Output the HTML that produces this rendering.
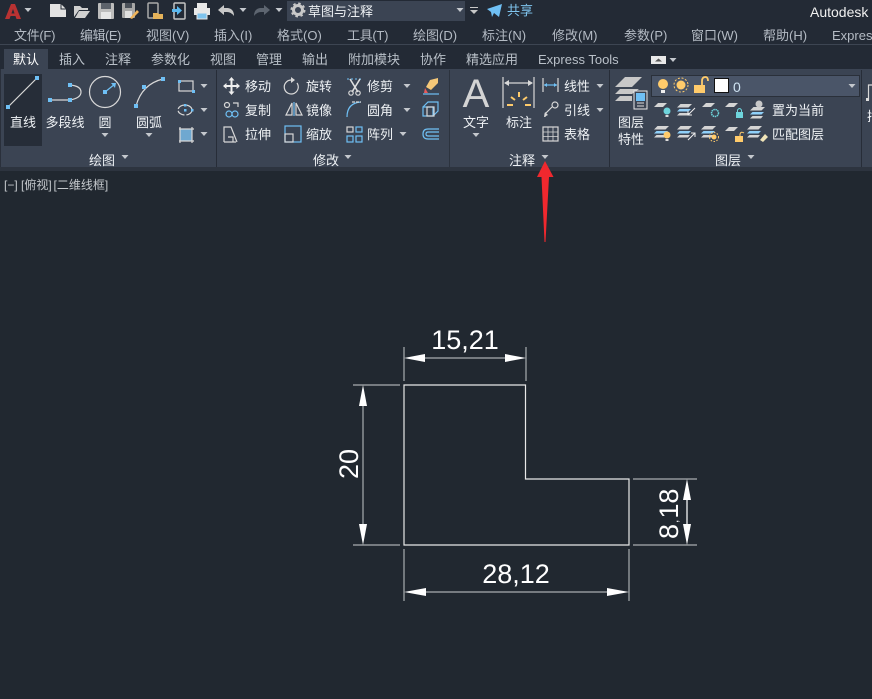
<!DOCTYPE html>
<html><head><meta charset="utf-8"><style>
html,body{margin:0;padding:0;background:#212830;width:872px;height:699px;overflow:hidden}
svg{display:block}
text{font-family:"Liberation Sans","Noto Sans CJK SC",sans-serif}
.m{font-size:13px;fill:#b4bbc4}
.t{font-size:13px;fill:#b9c0c8}
.r{font-size:13px;fill:#eef1f4}
.c{text-anchor:middle}
.s{fill:none;stroke:#d8d8d8;stroke-width:1.2}
.b{fill:none;stroke:#6fc0f5;stroke-width:1.2}
.g{fill:#cfcfcf}
.q{fill:#6fc0f5}
.y{fill:#ffcb6b}
.d{text-anchor:middle;font-size:27px;fill:#fff}
.w{stroke:#e6e6e6;stroke-width:1.2;fill:none}
.v{stroke:#a9adb0;stroke-width:1.2;fill:none}
</style></head><body>
<svg width="872" height="699" viewBox="0 0 872 699" xmlns="http://www.w3.org/2000/svg">
<defs>
<path id="car" d="M-3.5 -2H3.5L0 2Z" fill="#c4c8cd"/>
<g id="lay"><path d="M-6 -1 L-2 -5 H7 L3 -1Z" fill="#d4d4d4"/></g>
<g id="stk"><path d="M-8 6.500 L-5.500 4 H5 L3 6.500Z" fill="#d4d4d4"/><path d="M-8 2.500 L-5.500 0 H6 L3.500 2.500Z" fill="#8fd0fa"/><path d="M-8 -1.500 L-4.500 -5 H7 L3.500 -1.500Z" fill="#d4d4d4"/></g>
</defs>
<rect width="872" height="699" fill="#212830"/>
<rect width="872" height="44" fill="#232a35"/>
<rect y="44" width="872" height="1" fill="#3d4552"/>
<rect y="45" width="872" height="24" fill="#232a35"/>
<rect x="4" y="49" width="44" height="20" fill="#3b4453"/>
<rect y="69" width="872" height="98" fill="#3b4453"/>
<rect y="167" width="872" height="4" fill="#2d343f"/>
<rect x="0" y="69" width="1" height="98" fill="#2a303b"/>
<rect x="216" y="70" width="1" height="97" fill="#272d38"/>
<rect x="449" y="70" width="1" height="97" fill="#2c333e"/>
<rect x="609" y="70" width="1" height="97" fill="#272d38"/>
<rect x="861" y="70" width="1" height="97" fill="#272d38"/>

<!-- quick access -->
<path d="M5 19 L11 4 H15 L21 19 H16.500 L13 9 L9.500 19Z" fill="#b83232"/><path d="M9 13.500H17V16H9Z" fill="#b83232"/>
<use href="#car" x="28" y="10"/>
<path d="M50 4H61L66 9V17H50Z" fill="#e2e2e2"/><path d="M61 4V9H66" fill="none" stroke="#232a35"/>
<path d="M74 17V6H80L82 8H88V10H79L74 17ZM79 11H90L85 18H75Z" fill="#d0d0d0"/>
<rect x="98" y="3" width="16" height="16" rx="1" fill="#bdbdbd"/><rect x="101" y="3" width="10" height="6" fill="#5c626b"/><rect x="101" y="12" width="10" height="7" fill="#e6e6e6"/>
<rect x="122" y="3" width="13" height="15" rx="1" fill="#a8a8a8"/><rect x="125" y="3" width="7" height="5" fill="#4a5059"/><rect x="125" y="11" width="7" height="7" fill="#e0e0e0"/><path d="M130 18 L137 10 L139 12 L132 19Z" fill="#f0b45a"/>
<rect x="148" y="3" width="10" height="15" rx="1" fill="none" stroke="#aaa" stroke-width="1.500"/><path d="M153 13H158L159 14H163V19H153Z" fill="#e4b25a"/>
<rect x="174" y="3" width="11" height="16" rx="1" fill="none" stroke="#c4c4c4" stroke-width="1.500"/><path d="M172 9H177V6L182 10.500L177 15V12H172Z" fill="#5cb8ee"/>
<rect x="197" y="3" width="10" height="5" fill="#e8e8e8"/><rect x="194" y="8" width="16" height="7" fill="#e8e8e8"/><rect x="197" y="13" width="10" height="6" fill="#7fc4ee" stroke="#e8e8e8"/>
<path d="M218 10 L224 5 V8 H228 Q234 9 234 16 Q231 12 227 12 H224 V15Z" fill="#c8c8c8"/>
<use href="#car" x="243" y="10"/>
<path d="M270 10 L264 5 V8 H260 Q254 9 254 16 Q257 12 261 12 H264 V15Z" fill="#5d6570"/>
<use href="#car" x="279" y="10"/>
<rect x="287" y="1" width="178" height="20" fill="#3b4453"/>
<circle cx="298" cy="10" r="4.500" fill="none" stroke="#c8c8c8" stroke-width="3"/><circle cx="298" cy="10" r="6.500" fill="none" stroke="#c8c8c8" stroke-width="2" stroke-dasharray="2.500 2.600"/>
<text x="308" y="16" font-size="13" fill="#eef1f4">草图与注释</text>
<use href="#car" x="460" y="10"/>
<rect x="470" y="7" width="8" height="1" fill="#c8c8c8"/><path d="M470 10H478L474 14Z" fill="#c8c8c8"/>
<path d="M487 9 L502 4 L499 17 L494 13 L492 17 L491 12Z" fill="#6fc0f5"/>
<text x="507" y="15" font-size="13" fill="#7fc4ee">共享</text>
<text x="810" y="17" font-size="14" fill="#f0f0f0">Autodesk</text>

<!-- menu -->
<text class="m" x="14" y="40" style="letter-spacing:-.3px">文件(F)</text><text class="m" x="80" y="40" style="letter-spacing:-.5px">编辑(E)</text><text class="m" x="146" y="40">视图(V)</text><text class="m" x="214" y="40">插入(I)</text><text class="m" x="277" y="40">格式(O)</text><text class="m" x="347" y="40" style="letter-spacing:-.3px">工具(T)</text><text class="m" x="413" y="40">绘图(D)</text><text class="m" x="482" y="40">标注(N)</text><text class="m" x="552" y="40">修改(M)</text><text class="m" x="624" y="40">参数(P)</text><text class="m" x="691" y="40">窗口(W)</text><text class="m" x="763" y="40">帮助(H)</text><text class="m" x="832" y="40">Express</text>
<!-- tabs -->
<text class="t" x="13" y="64" style="fill:#fff">默认</text><text class="t" x="59" y="64">插入</text><text class="t" x="105" y="64">注释</text><text class="t" x="151" y="64">参数化</text><text class="t" x="210" y="64">视图</text><text class="t" x="256" y="64">管理</text><text class="t" x="302" y="64">输出</text><text class="t" x="348" y="64">附加模块</text><text class="t" x="420" y="64">协作</text><text class="t" x="466" y="64">精选应用</text><text class="t" x="538" y="64">Express Tools</text>
<rect x="651" y="56" width="15" height="8" fill="#e8e8e8"/><path d="M655 61.500H662L658.500 58.500Z" fill="#555"/><use href="#car" x="673" y="60"/>

<!-- draw panel -->
<rect x="4" y="74" width="38" height="72" fill="#262d38"/>
<path d="M8 107L37 78" class="s"/><rect x="6" y="105" width="4" height="4" class="q"/><rect x="35" y="76" width="4" height="4" class="q"/>
<path d="M50 100H70Q81 98 81 92Q81 86 70 85" class="s"/><rect x="48" y="98" width="4" height="4" class="q"/><rect x="68" y="98" width="4" height="4" class="q"/><rect x="68" y="83" width="4" height="4" class="q"/>
<circle cx="105" cy="92" r="15.500" class="s"/><path d="M105 92L115 84" class="b"/><path d="M111 83L116 83L115 88Z" class="q"/><rect x="103" y="90" width="4" height="4" class="q"/>
<path d="M136 106Q142 84 163 79" class="s"/><rect x="134" y="104" width="4" height="4" class="q"/><rect x="142" y="85" width="4" height="4" class="q"/><rect x="161" y="77" width="4" height="4" class="q"/>
<rect x="179" y="81" width="14" height="10" class="s"/><rect x="178" y="80" width="3" height="3" class="q"/><rect x="192" y="90" width="3" height="3" class="q"/><use href="#car" x="204" y="86"/>
<ellipse cx="185" cy="110" rx="7" ry="5" class="s" stroke-dasharray="8 2"/><rect x="184" y="104" width="2.500" height="2.500" class="q"/><rect x="184" y="109" width="2.500" height="2.500" class="q"/><rect x="191" y="109" width="2.500" height="2.500" class="q"/><use href="#car" x="204" y="110"/>
<rect x="180" y="129" width="12" height="12" fill="#6fa8d0"/><path d="M179 129H194M179 141H194M180 127V143M192 127V143" class="s"/><use href="#car" x="204" y="134"/>
<text class="r c" x="23" y="127">直线</text><text class="r c" x="65" y="127">多段线</text><text class="r c" x="105" y="127">圆</text><text class="r c" x="149" y="127">圆弧</text>
<use href="#car" x="105" y="135"/><use href="#car" x="149" y="135"/>
<text class="r c" x="102" y="165">绘图</text><use href="#car" x="125" y="157"/>

<!-- modify panel -->
<path d="M224 86H239M231.500 78.500V93.500" stroke="#eee" stroke-width="2"/><path d="M231.500 77L228.500 80.500H234.500ZM231.500 95L228.500 91.500H234.500ZM223 86L226.500 83V89ZM240 86L236.500 83V89Z" fill="#eee"/>
<text class="r" x="245" y="91">移动</text>
<path d="M291 80A7 7 0 1 0 297 83" class="s"/><path d="M291 77V83L295 80Z" fill="#d8d8d8"/>
<text class="r" x="306" y="91">旋转</text>
<path d="M347 79H361" stroke="#6fc0f5" stroke-dasharray="2 2"/><path d="M350 79L358 92M360 79L352 92" stroke="#e0e0e0" stroke-width="1.600"/><circle cx="351" cy="93" r="2.200" class="s"/><circle cx="358" cy="93" r="2.200" class="s"/>
<text class="r" x="367" y="91">修剪</text><use href="#car" x="407" y="86"/>
<path d="M430 80L438 78V83L431 90L426 87Z" fill="#f5c878"/><path d="M425 88L428 93H424Z" fill="#e85a5a"/><path d="M423 94H439" class="b"/>
<circle cx="227" cy="105" r="2.500" class="s"/><circle cx="229" cy="114" r="3" class="b"/><circle cx="235" cy="114" r="3" class="b"/><path d="M233 103H238V107" class="s"/>
<text class="r" x="245" y="115">复制</text>
<path d="M286 115L292 103V115ZM296 103L302 115H296Z" class="s"/><path d="M294 102V116" class="b"/>
<text class="r" x="306" y="115">镜像</text>
<path d="M347 117Q347 103 361 102" class="b"/><path d="M352 102H361" class="s" stroke-dasharray="3 1"/>
<text class="r" x="367" y="115">圆角</text><use href="#car" x="407" y="110"/>
<path d="M423 107H433V116H423ZM423 107L428 102H438V111L433 116" class="b"/><rect x="427" y="107" width="7" height="9" class="s"/>
<path d="M224 142V127H231L237 142M224 142H236" class="s"/><path d="M228 137H233V142" class="s"/>
<text class="r" x="245" y="139">拉伸</text>
<rect x="285" y="126" width="16" height="16" class="b"/><rect x="285" y="134" width="8" height="8" class="s"/>
<text class="r" x="306" y="139">缩放</text>
<rect x="347" y="127" width="6" height="5" class="s"/><rect x="356" y="127" width="6" height="5" class="b"/><rect x="347" y="136" width="6" height="6" class="b"/><rect x="356" y="136" width="6" height="6" class="b"/>
<text class="r" x="367" y="139">阵列</text><use href="#car" x="403" y="134"/>
<path d="M439 129H428Q423 129 423 134Q423 139 428 139H439M439 132H428Q426 132 426 134Q426 136 428 136H439" class="b"/>
<text class="r c" x="326" y="165">修改</text><use href="#car" x="348" y="157"/>

<!-- annotation panel -->
<text x="476" y="107" text-anchor="middle" font-size="40" fill="#d4d4d4">A</text>
<text class="r c" x="476" y="127">文字</text><use href="#car" x="476" y="135"/>
<path d="M503 77V108M534 77V108M505 83H532" class="s"/><path d="M504 83L509 80V86ZM533 83L528 80V86Z" fill="#d8d8d8"/>
<path d="M519 92V97M511 97L515 100M527 97L523 100M507 105H513M525 105H531" stroke="#ffcb6b" stroke-width="2"/>
<text class="r c" x="519" y="127">标注</text>
<path d="M543 78V92M558 78V92" class="s"/><path d="M544 85H557" class="b"/><path d="M544 85L547 83V87ZM557 85L554 83V87Z" class="q"/>
<text class="r" x="564" y="91">线性</text><use href="#car" x="600" y="86"/>
<circle cx="555" cy="105" r="3" class="s"/><path d="M552 107L545 114V117" class="s"/><path d="M544 117L545 112L548 115Z" fill="#d8d8d8"/>
<text class="r" x="564" y="115">引线</text><use href="#car" x="600" y="110"/>
<rect x="543" y="127" width="15" height="14" class="s"/><path d="M543 132H558M543 136.500H558M548 127V141M553 127V141" stroke="#d8d8d8" stroke-width=".8"/>
<text class="r" x="564" y="139">表格</text>
<text class="r c" x="522" y="165">注释</text><use href="#car" x="545" y="157"/>

<!-- layers panel -->
<path d="M615 87L625 77H642L632 87Z M615 94L620 89H639L632 94Z M615 101L620 96H632V101Z" fill="#c8c8c8"/>
<rect x="634" y="91" width="13" height="18" fill="#3b4453" stroke="#e8e8e8"/><rect x="636" y="93" width="9" height="8" fill="#6fc0f5"/><path d="M637 103H644M644 106H637" stroke="#ddd"/>
<text class="r c" x="631" y="127">图层</text><text class="r c" x="631" y="144">特性</text>
<rect x="651.500" y="75.500" width="208" height="21" fill="#4a5568" stroke="#2a303a"/>
<circle cx="663" cy="84" r="5" class="y"/><rect x="661" y="90" width="4" height="3" fill="#eee"/>
<circle cx="681" cy="85" r="4.500" class="y"/><circle cx="681" cy="85" r="7" fill="none" stroke="#ffcb6b" stroke-dasharray="2 1.700"/>
<rect x="694" y="85" width="11" height="8" class="y"/><path d="M702 85V81Q702 77 705.500 77Q708 77 708 81" fill="none" stroke="#ffcb6b" stroke-width="1.800"/>
<rect x="714.500" y="78.500" width="14" height="14" fill="#fff" stroke="#111"/>
<text x="733" y="92" font-size="14" fill="#cfe3f2">0</text>
<use href="#car" x="852" y="86"/>
<use href="#lay" x="660" y="108"/><circle cx="667" cy="111" r="3.500" fill="#6ed4dc"/><rect x="665.500" y="115" width="3" height="2" fill="#ddd"/>
<use href="#stk" x="685" y="109"/><path d="M695 108L688 115M688 111V115H692" stroke="#eee" fill="none"/>
<use href="#lay" x="708" y="108"/><circle cx="715" cy="113" r="3.500" fill="none" stroke="#6ed4dc" stroke-width="1.500" stroke-dasharray="1.500 .6"/>
<use href="#lay" x="731" y="108"/><rect x="736" y="112" width="7" height="6" fill="#6ed4dc"/><path d="M737.500 112V110Q739.500 107 741.500 110V112" fill="none" stroke="#6ed4dc"/>
<use href="#stk" x="758" y="112"/><circle cx="759" cy="104" r="3.500" fill="#c8c8c8"/>
<text class="r" x="772" y="115">置为当前</text>
<use href="#stk" x="662" y="131"/><circle cx="667" cy="135" r="3.500" class="y"/><rect x="665.500" y="139" width="3" height="2" fill="#ddd"/>
<use href="#stk" x="685" y="131"/><path d="M688 140L695 133M691 133H695V137" stroke="#eee" fill="none"/>
<use href="#stk" x="709" y="131"/><circle cx="714" cy="137" r="2.500" class="y"/><circle cx="714" cy="137" r="4.500" fill="none" stroke="#ffcb6b" stroke-dasharray="1.500 1.500"/>
<use href="#lay" x="731" y="132"/><rect x="735" y="136" width="8" height="6" class="y"/><path d="M740 136V134Q741 131 744 133" fill="none" stroke="#ffcb6b"/>
<use href="#stk" x="755" y="131"/><path d="M760 140L765 134L768 137L763 142Z" fill="#f0e4b8"/>
<text class="r" x="772" y="139">匹配图层</text>
<text class="r c" x="728" y="165">图层</text><use href="#car" x="751" y="157"/>
<path d="M868.500 100V85H872" class="s"/><rect x="866" y="98" width="3" height="3" fill="#ddd"/>
<text class="r" x="867" y="121">插</text>

<!-- status label -->
<text y="189" font-size="12" fill="#c4c8cc"><tspan x="4">[−]</tspan><tspan x="21">[俯视]</tspan><tspan x="53.500">[二维线框]</tspan></text>

<!-- drawing -->
<path d="M404 385H525.500V479H629V545H404Z" fill="none" stroke="#e8e8e8" stroke-width="1.200"/>
<path d="M404 347V381M526 347V381M414 358H516" class="v"/>
<path d="M404 358L425 354V362ZM526 358L505 354V362Z" fill="#fff"/>
<text class="d" x="465" y="349">15,21</text>
<path d="M353 385H400M353 545H400M363 405V525" class="v"/>
<path d="M363 385L359 406H367ZM363 545L359 524H367Z" fill="#fff"/>
<text class="d" transform="translate(358 464) rotate(-90)">20</text>
<path d="M404 549V601M629 549V601M414 592H619" class="v"/>
<path d="M404 592L426 588V596ZM629 592L607 588V596Z" fill="#fff"/>
<text class="d" x="516" y="583">28,12</text>
<path d="M633 479H697M633 545H697" class="v"/><path d="M687 495V530" stroke="#a9adb0" stroke-width="2"/>
<path d="M687 479L683 500H691ZM687 545L683 524H691Z" fill="#fff"/>
<text font-size="27" fill="#fff" transform="translate(678 539) rotate(-90)">8<tspan font-size="12" dx="1">,</tspan><tspan dx="1">18</tspan></text>

<!-- red arrow -->
<path d="M545 161L553.500 177H549L545.500 242H544.500L541.500 177H537Z" fill="#f0282e"/>
</svg>
</body></html>
